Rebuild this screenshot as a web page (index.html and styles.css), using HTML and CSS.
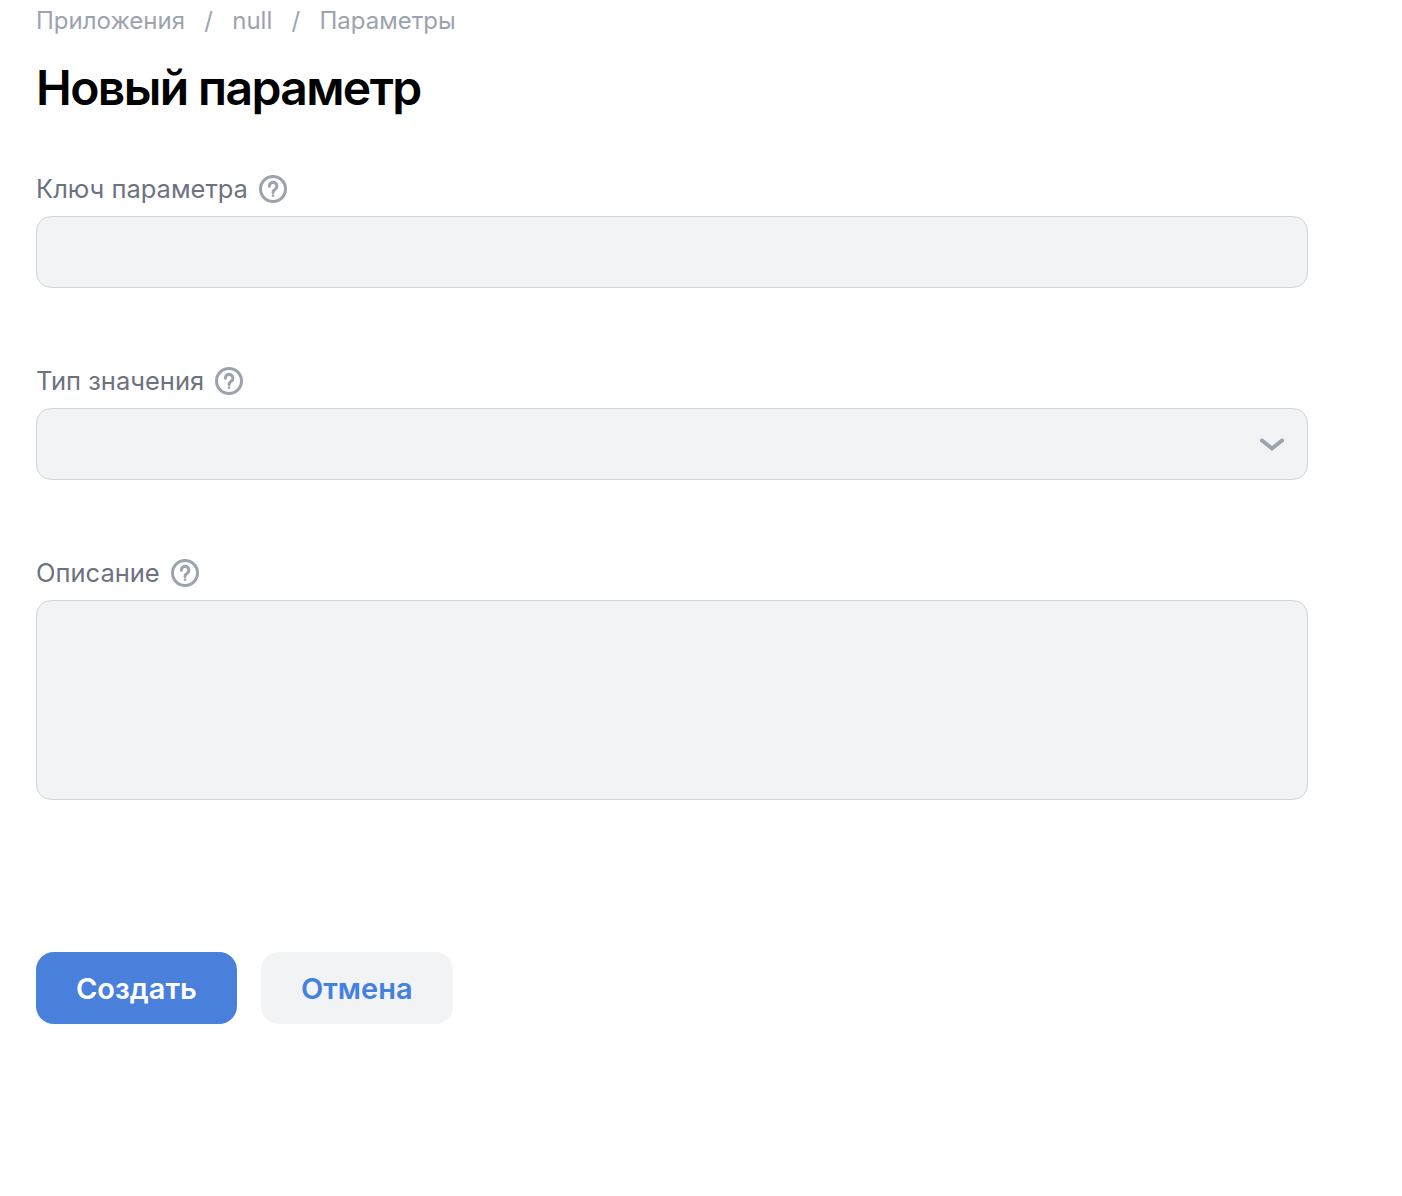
FILE: index.html
```html
<!DOCTYPE html>
<html lang="ru">
<head>
<meta charset="utf-8">
<title>Новый параметр</title>
<link rel="stylesheet" href="styles.css">
</head>
<body>
<main class="page">
  <nav class="crumbs">
    <span>Приложения</span><span class="sep">/</span><span>null</span><span class="sep">/</span><span>Параметры</span>
  </nav>
  <h1 class="title">Новый параметр</h1>
  <form class="form">
    <div class="field">
      <div class="label"><span>Ключ параметра</span>
        <svg class="help" viewBox="0 0 28 28"><circle cx="14" cy="14" r="12.5"/><path d="M10.3 11.2a3.8 3.8 0 1 1 5.8 3.2c-1.3.8-2.1 1.5-2.1 3"/><circle class="dot" cx="14" cy="20.6" r="1.3"/></svg>
      </div>
      <div class="input"></div>
    </div>
    <div class="field">
      <div class="label"><span>Тип значения</span>
        <svg class="help" viewBox="0 0 28 28"><circle cx="14" cy="14" r="12.5"/><path d="M10.3 11.2a3.8 3.8 0 1 1 5.8 3.2c-1.3.8-2.1 1.5-2.1 3"/><circle class="dot" cx="14" cy="20.6" r="1.3"/></svg>
      </div>
      <div class="input select">
        <svg class="chev" viewBox="0 0 24 14"><path d="M2 2.5l10 8 10-8"/></svg>
      </div>
    </div>
    <div class="field">
      <div class="label"><span>Описание</span>
        <svg class="help" viewBox="0 0 28 28"><circle cx="14" cy="14" r="12.5"/><path d="M10.3 11.2a3.8 3.8 0 1 1 5.8 3.2c-1.3.8-2.1 1.5-2.1 3"/><circle class="dot" cx="14" cy="20.6" r="1.3"/></svg>
      </div>
      <div class="input area"></div>
    </div>
    <div class="actions">
      <button type="button" class="btn primary">Создать</button>
      <button type="button" class="btn secondary">Отмена</button>
    </div>
  </form>
</main>
</body>
</html>
```
FILE: styles.css
```css
html, body { margin: 0; padding: 0; background: #fff; }
body { font-family: Inter, "Noto Sans", sans-serif; font-optical-sizing: none; }
.page { padding: 0 94px 0 36px; height: 1196px; box-sizing: border-box; overflow: hidden; }
.crumbs { display: flex; gap: 19.3px; height: 42px; align-items: center; font-size: 24px; line-height: 42px; color: #9ca3af; }
.title { margin: 16px 0 0; font-size: 48px; line-height: 60px; font-weight: 600; color: #000; letter-spacing: -1.6px; }
.form { margin-top: 57px; }
.field { margin-bottom: 79px; }
.label { display: flex; align-items: center; gap: 11px; height: 28px; margin-bottom: 13px; font-size: 25.5px; line-height: 28px; color: #6b7280; }
.help { width: 28px; height: 28px; fill: none; stroke: #9ca3af; stroke-width: 3; stroke-linecap: round; }
.help .dot { fill: #9ca3af; stroke: none; }
.input { box-sizing: border-box; height: 72px; background: #f2f3f5; border: 1px solid #d1d5db; border-radius: 15px; display: flex; align-items: center; justify-content: flex-end; }
.area { height: 200px; }
.chev { width: 24px; height: 14px; margin: 2px 23px 0 0; fill: none; stroke: #9ca3af; stroke-width: 4; stroke-linecap: round; stroke-linejoin: round; }
.actions { display: flex; gap: 24px; margin-top: 152px; }
.btn { height: 72px; border: 0; border-radius: 18px; padding: 0 40px; font-family: inherit; font-size: 29px; font-weight: 600; }
.primary { background: #4880dc; color: #fff; }
.secondary { background: #f2f3f5; color: #4480e0; }
```
